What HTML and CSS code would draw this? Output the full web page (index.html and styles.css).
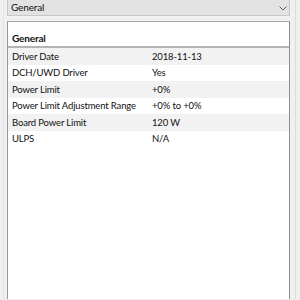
FILE: index.html
```html
<!DOCTYPE html>
<html lang="en">
<head>
    <meta charset="UTF-8">
    <title>General</title>
    <link rel="stylesheet" href="styles.css">
</head>
<body>
    <div class="window">
        <div class="combo">
            <span>General</span>
            <svg class="chevron" width="8" height="5" viewBox="0 0 8 5">
                <path d="M0.5 0.5 L4 4 L7.5 0.5" fill="none" stroke="#606060" stroke-width="1"/>
            </svg>
        </div>
        <div class="panel">
            <div class="section">General</div>
            <div class="row"><span class="label">Driver Date</span><span class="value">2018-11-13</span></div>
            <div class="row"><span class="label">DCH/UWD Driver</span><span class="value">Yes</span></div>
            <div class="row"><span class="label">Power Limit</span><span class="value">+0%</span></div>
            <div class="row"><span class="label">Power Limit Adjustment Range</span><span class="value">+0% to +0%</span></div>
            <div class="row"><span class="label">Board Power Limit</span><span class="value">120 W</span></div>
            <div class="row"><span class="label">ULPS</span><span class="value">N/A</span></div>
        </div>
    </div>
</body>
</html>
```
FILE: styles.css
```css
body {
    margin: 0;
    background: #f0f0f0;
    font-family: Lato, "Open Sans", sans-serif;
    font-size: 9.5px;
    letter-spacing: -0.15px;
    color: #111;
    overflow: hidden;
}

.window {
    height: 300px;
    margin: 0 4px 0 3px;
    padding: 0 5px 0 3px;
    border-left: 1px solid #e4e4e4;
    border-right: 1px solid #dcdcdc;
}

.combo {
    height: 16px;
    background: #e3e3e3;
    border: 1px solid #c8c8c8;
    border-top: none;
    display: flex;
    align-items: center;
    justify-content: space-between;
    padding: 0 2px 0 3px;
    margin-top: -1px;
    font-size: 10px;
}

.chevron {
    margin-top: 2px;
}

.panel {
    margin-top: 5px;
    height: 290px;
    background: #fff;
    border: 1px solid #a9a9a9;
    border-left-color: #9a9a9a;
    border-right-color: #8e8e8e;
}

.section {
    height: 24px;
    padding: 0 4px;
    display: flex;
    align-items: flex-end;
    font-weight: bold;
    font-size: 10px;
    border-bottom: 2px solid #b4b4b4;
    line-height: 15px;
}

.row {
    display: flex;
    height: 16.5px;
    align-items: center;
    padding: 0 4px;
    white-space: nowrap;
}

.row:nth-child(even) {
    background: #f2f2f2;
}

.label {
    flex: none;
    width: 140px;
}
```
